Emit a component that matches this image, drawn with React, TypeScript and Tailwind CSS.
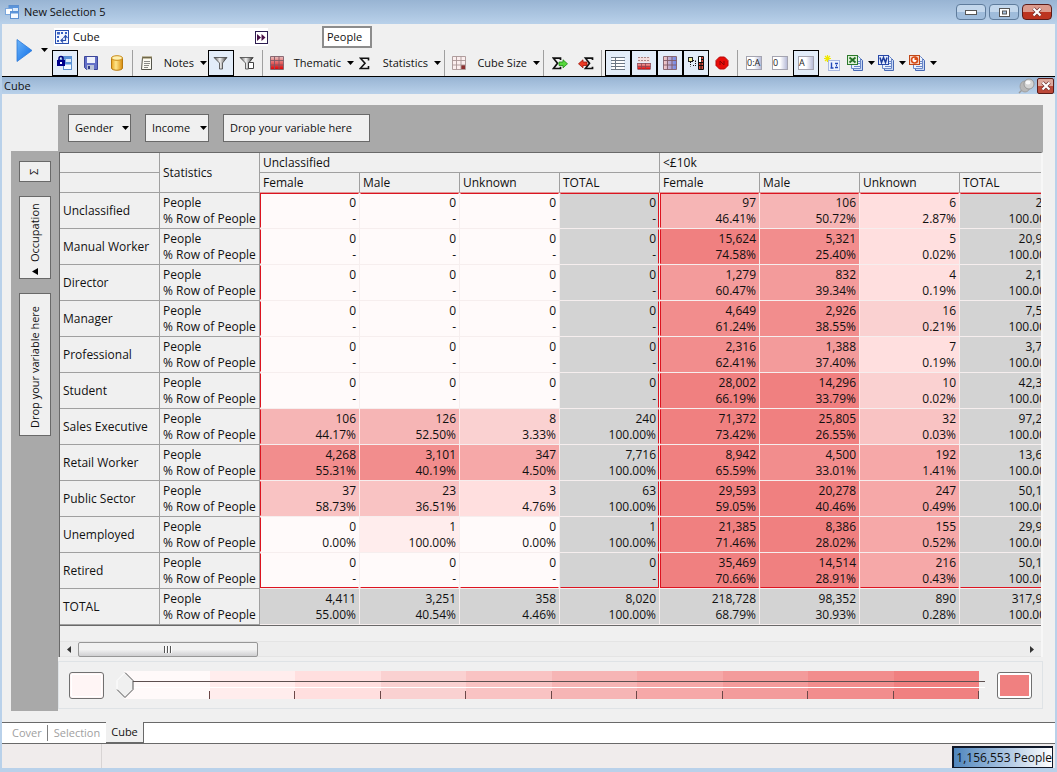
import React, { useState } from 'react';

type Stat = [string, string];

interface CubeRow {
  label: string;
  cells: Stat[];
}

const LEVEL_CLASSES = [
  'bg-[#fffafa]',
  'bg-[#ffeded]',
  'bg-[#ffdfdf]',
  'bg-[#fad1d1]',
  'bg-[#f9c3c3]',
  'bg-[#f6b5b5]',
  'bg-[#f6a8a8]',
  'bg-[#f39b9b]',
  'bg-[#f28d8d]',
  'bg-[#f08080]',
];

// Upper bound (exclusive) of each shading level
const LEVEL_LIMITS = [1, 3, 8, 20, 90, 150, 600, 2000, 8000];

const ROWS: CubeRow[] = [
  { label: 'Unclassified', cells: [['0', '-'], ['0', '-'], ['0', '-'], ['0', '-'], ['97', '46.41%'], ['106', '50.72%'], ['6', '2.87%'], ['209', '100.00%']] },
  { label: 'Manual Worker', cells: [['0', '-'], ['0', '-'], ['0', '-'], ['0', '-'], ['15,624', '74.58%'], ['5,321', '25.40%'], ['5', '0.02%'], ['20,950', '100.00%']] },
  { label: 'Director', cells: [['0', '-'], ['0', '-'], ['0', '-'], ['0', '-'], ['1,279', '60.47%'], ['832', '39.34%'], ['4', '0.19%'], ['2,115', '100.00%']] },
  { label: 'Manager', cells: [['0', '-'], ['0', '-'], ['0', '-'], ['0', '-'], ['4,649', '61.24%'], ['2,926', '38.55%'], ['16', '0.21%'], ['7,591', '100.00%']] },
  { label: 'Professional', cells: [['0', '-'], ['0', '-'], ['0', '-'], ['0', '-'], ['2,316', '62.41%'], ['1,388', '37.40%'], ['7', '0.19%'], ['3,711', '100.00%']] },
  { label: 'Student', cells: [['0', '-'], ['0', '-'], ['0', '-'], ['0', '-'], ['28,002', '66.19%'], ['14,296', '33.79%'], ['10', '0.02%'], ['42,308', '100.00%']] },
  { label: 'Sales Executive', cells: [['106', '44.17%'], ['126', '52.50%'], ['8', '3.33%'], ['240', '100.00%'], ['71,372', '73.42%'], ['25,805', '26.55%'], ['32', '0.03%'], ['97,209', '100.00%']] },
  { label: 'Retail Worker', cells: [['4,268', '55.31%'], ['3,101', '40.19%'], ['347', '4.50%'], ['7,716', '100.00%'], ['8,942', '65.59%'], ['4,500', '33.01%'], ['192', '1.41%'], ['13,634', '100.00%']] },
  { label: 'Public Sector', cells: [['37', '58.73%'], ['23', '36.51%'], ['3', '4.76%'], ['63', '100.00%'], ['29,593', '59.05%'], ['20,278', '40.46%'], ['247', '0.49%'], ['50,118', '100.00%']] },
  { label: 'Unemployed', cells: [['0', '0.00%'], ['1', '100.00%'], ['0', '0.00%'], ['1', '100.00%'], ['21,385', '71.46%'], ['8,386', '28.02%'], ['155', '0.52%'], ['29,926', '100.00%']] },
  { label: 'Retired', cells: [['0', '-'], ['0', '-'], ['0', '-'], ['0', '-'], ['35,469', '70.66%'], ['14,514', '28.91%'], ['216', '0.43%'], ['50,199', '100.00%']] },
  { label: 'TOTAL', cells: [['4,411', '55.00%'], ['3,251', '40.54%'], ['358', '4.46%'], ['8,020', '100.00%'], ['218,728', '68.79%'], ['98,352', '30.93%'], ['890', '0.28%'], ['317,970', '100.00%']] },
];

const SUB_HEADERS = ['Female', 'Male', 'Unknown', 'TOTAL', 'Female', 'Male', 'Unknown', 'TOTAL'];

const levelClass = (value: string) => {
  const n = Number(value.replace(/,/g, ''));
  const index = LEVEL_LIMITS.findIndex(limit => n < limit);
  return LEVEL_CLASSES[index === -1 ? 9 : index];
};

/* ---------- icons ---------- */

const Caret: React.FC = () => (
  <svg width="7" height="4" viewBox="0 0 7 4" className="shrink-0"><path d="M0 0h7L3.5 4z" fill="#000" /></svg>
);

const IconWindows: React.FC<{ locked?: boolean }> = ({ locked }) => (
  <svg width="16" height="16" viewBox="0 0 16 16" className="shrink-0">
    <rect x="5" y="1.500" width="9.500" height="8" fill="#dcebfb" stroke="#5b8fd0" />
    <path d="M5 3h10" stroke="#5a94da" strokeWidth="2" />
    <rect x="1.500" y="4.500" width="7" height="6" fill="#fff" stroke="#7ba7dc" />
    <rect x="6.500" y="7.500" width="8" height="7" fill="#f4f9ff" stroke="#5b8fd0" />
    <path d="M6 8.500h9" stroke="#5a94da" strokeWidth="2" />
    {locked && (
      <g>
        <path d="M2 6V3.500a2 2 0 0 1 4 0V6" fill="none" stroke="#000078" strokeWidth="1.500" />
        <rect x="0" y="5" width="8" height="6" fill="#00008c" />
        <rect x="3" y="7" width="2" height="2" fill="#fff" />
      </g>
    )}
  </svg>
);

const IconCube: React.FC = () => (
  <svg width="14" height="14" viewBox="0 0 14 14" className="shrink-0">
    <rect x=".5" y=".5" width="13" height="13" fill="#f4f8ff" stroke="#2a4fae" />
    <path d="M2 2h3v2.500H2zM2 6h2v2H2zM2 10h2v2H2zM6 2h2v2H6zM10 2h2v2h-2z" fill="#3b63c4" />
    <path d="M6.500 10.500h4V6M8.500 8l2-2.500 2 2.500M8 8.500l-2 2 2 2" fill="none" stroke="#2a4fae" strokeWidth="1.200" />
  </svg>
);

const IconSave: React.FC = () => (
  <svg width="16" height="16" viewBox="0 0 16 16">
    <path d="M1.500 1.500h13v13h-11l-2-2z" fill="#6470c8" stroke="#3c4699" />
    <rect x="4" y="2" width="8" height="6" fill="#eef1fb" />
    <rect x="4" y="10" width="7" height="5" fill="#b9c2d8" />
    <rect x="5" y="11" width="2" height="3" fill="#323c86" />
  </svg>
);

const IconDatabase: React.FC = () => (
  <svg width="14" height="16" viewBox="0 0 14 16">
    <defs>
      <linearGradient id="gold" x1="0" x2="1" y1="0" y2="0">
        <stop offset="0" stopColor="#e8a21c" /><stop offset=".4" stopColor="#ffe68a" /><stop offset="1" stopColor="#d98b0c" />
      </linearGradient>
    </defs>
    <path d="M1.500 3v10c0 3 11 3 11 0V3z" fill="url(#gold)" stroke="#b87a10" />
    <ellipse cx="7" cy="3" rx="5.500" ry="2.300" fill="#fff0b0" stroke="#c98c1a" />
  </svg>
);

const IconNotes: React.FC = () => (
  <svg width="14" height="16" viewBox="0 0 14 16">
    <path d="M2.500 2.500h9v12h-10z" fill="#fbfaf2" stroke="#55554c" />
    <path d="M3 1v3M5 1v3M7 1v3M9 1v3M11 1v3" stroke="#8a7c4c" />
    <path d="M4 6.500h6M4 8.500h6M4 10.500h5M4 12.500h4" stroke="#8a8a86" />
  </svg>
);

const IconFilter: React.FC<{ crossed?: boolean }> = ({ crossed }) => (
  <svg width="16" height="14" viewBox="0 0 16 14">
    <defs>
      <linearGradient id="steel" x1="0" x2="1" y1="0" y2="0">
        <stop offset="0" stopColor="#555" /><stop offset=".45" stopColor="#f4f4f4" /><stop offset="1" stopColor="#333" />
      </linearGradient>
    </defs>
    <path d="M1 1.500h13L9.500 7v6h-3V7z" fill="url(#steel)" stroke="#444" strokeWidth=".8" />
    {crossed && <path d="M9.500 6.500v6h5v-6zM11 5.500l3-4" fill="#fff" stroke="#444" />}
  </svg>
);

const IconGrid: React.FC<{ variant: 'red' | 'pale' | 'rows' | 'cols' | 'both' }> = ({ variant }) => (
  <svg width="14" height="14" viewBox="0 0 14 14" className="shrink-0">
    <defs>
      <linearGradient id="gridRed" x1="0" x2="0" y1="0" y2="1"><stop offset="0" stopColor="#e8b8b8" /><stop offset="1" stopColor="#e00808" /></linearGradient>
      <linearGradient id="gridBoth" x1="0" x2="1" y1="0" y2="0"><stop offset="0" stopColor="#f8c8c0" /><stop offset="1" stopColor="#6f88e8" /></linearGradient>
    </defs>
    {variant === 'red' && <rect x="1" y="1" width="12" height="12" fill="url(#gridRed)" />}
    {variant === 'pale' && <><rect x="1" y="1" width="12" height="12" fill="#fbeeee" /><rect x="9" y="9" width="4" height="4" fill="#8c3030" /></>}
    {variant === 'rows' && <rect x="1" y="1" width="12" height="12" fill="#fff" />}
    {variant === 'cols' && <><rect x="1" y="1" width="12" height="5" fill="#f4dede" /><rect x="1" y="7" width="12" height="6" fill="url(#gridRed)" /></>}
    {variant === 'both' && <rect x="1" y="1" width="12" height="12" fill="url(#gridBoth)" />}
    {variant === 'rows' ? (
      <path d="M0 1.500h4M0 4.500h4M0 7.500h4M0 10.500h4M0 13.500h4M5 1.500h9M5 4.500h9M5 7.500h9M5 10.500h9M5 13.500h9M4.500 1v13" stroke="#6b7683" fill="none" />
    ) : variant === 'cols' ? (
      <>
        <path d="M1 1.500h12M1 4.500h12" stroke="#a88" strokeDasharray="2 1" fill="none" />
        <path d="M.5 7.500h13M.5 10.500h13M.5 13.500h13M.5 7v6M4.500 7v6M8.500 7v6M13.500 7v6" stroke="#8c4450" strokeWidth=".8" fill="none" />
      </>
    ) : (
      <path d="M.5.5h13v13H.5zM.5 4.500h13M.5 9h13M4.500.5v13M9 .5v13" stroke={variant === 'pale' ? '#a89494' : '#7e5a65'} strokeWidth=".9" fill="none" />
    )}
  </svg>
);

const IconSigma: React.FC = () => (
  <svg width="11" height="13" viewBox="0 0 11 13" className="shrink-0">
    <path d="M9.500 3.500V1.200H1.500L6 6.300l-4.700 5.200h8.200V9" fill="none" stroke="#111" strokeWidth="1.600" />
  </svg>
);

const IconSigmaArrow: React.FC<{ out?: boolean }> = ({ out }) => (
  <svg width="16" height="13" viewBox="0 0 16 13">
    {out ? (
      <>
        <path d="M8.500 3V1.200H1.500L5.500 6.300l-4 5.200h7V9.800" fill="none" stroke="#111" strokeWidth="1.700" />
        <path d="M7 5h4V2.800l4.500 4-4.500 4V8.500H7z" fill="#57d83c" stroke="#1c8a12" strokeWidth=".8" />
      </>
    ) : (
      <>
        <path d="M14.500 3V1.200h-7l4 5.100-4 5.200h7V9.800" fill="none" stroke="#111" strokeWidth="1.700" />
        <path d="M9 5H5V2.800l-4.500 4 4.500 4V8.500h4z" fill="#ec3a24" stroke="#9c1408" strokeWidth=".8" />
      </>
    )}
  </svg>
);

const IconTree: React.FC = () => (
  <svg width="16" height="14" viewBox="0 0 16 14">
    <rect x=".5" y="1.500" width="4" height="4" fill="#f2f29a" stroke="#222" />
    <path d="M2.500 6v4.500M5 4.500h2.500M5 9.500h3M7.500 5v5" stroke="#111" strokeDasharray="1 1" fill="none" />
    <rect x="10" y="1" width="5" height="12" fill="#e04a3a" />
    <path d="M10.500.5h5v13h-5zM10 3.500h6M10 6.500h6M10 9.500h6M13 0v13" stroke="#111" fill="none" />
    <rect x="11" y="1" width="2" height="5" fill="#fff" />
  </svg>
);

const IconStop: React.FC = () => (
  <svg width="14" height="14" viewBox="0 0 14 14">
    <path d="M4.500 1h5L13 4.500v5L9.500 13h-5L1 9.500v-5z" fill="#e80c08" stroke="#b80808" />
    <path d="M5 9V5l4 4V5" fill="none" stroke="#8c0404" />
  </svg>
);

const IconLabel: React.FC<{ text: string }> = ({ text }) => (
  <span className="flex h-3.5 w-4 items-center border border-[#a4a4b0] bg-linear-to-r from-white from-50% to-[#b8bcd8] text-[9px] leading-3 text-[#222]">{text}</span>
);

const IconNewCube: React.FC = () => (
  <svg width="16" height="16" viewBox="0 0 16 16">
    <path d="M3.500 0v7M0 3.500h7M1 1l5 5M6 1L1 6" stroke="#f0e800" strokeWidth="1.200" />
    <rect x="4.500" y="5.500" width="11" height="10" fill="#eef3ff" stroke="#a9b8e0" />
    <path d="M7.500 7.500v6M6.500 13h3M11 8.500h3M11 12.500h3M12 10.500h1" stroke="#2448b8" strokeWidth="1.400" fill="none" />
  </svg>
);

const IconExport: React.FC<{ kind: 'excel' | 'word' | 'ppt' }> = ({ kind }) => (
  <svg width="16" height="16" viewBox="0 0 16 16">
    <path d="M6.500 3.500h7l2 2v10h-9z" fill="#c8d8f4" stroke="#4668b4" />
    <path d="M4.500 1.500h7l2 2v10h-9z" fill="#eaf1fd" stroke="#6a88c8" />
    <path d="M10 6.500h3M10 8.500h3M7 11.500h6" stroke="#6a88c8" />
    {kind === 'excel' && <><rect x=".5" y=".5" width="10" height="9" fill="#dff0d8" stroke="#2c7a2c" /><path d="M2.500 2.500l6 5M8.500 2.500l-6 5" stroke="#227022" strokeWidth="1.800" /></>}
    {kind === 'word' && <><rect x=".5" y=".5" width="10" height="9" fill="#e4ecfc" stroke="#2848a8" /><path d="M2 2.500l1.500 5 2-5 2 5L9 2.500" fill="none" stroke="#1c3c9c" strokeWidth="1.500" /></>}
    {kind === 'ppt' && <><rect x=".5" y=".5" width="10" height="9" fill="#f7d8c8" stroke="#c04818" /><circle cx="5.500" cy="5" r="3" fill="#fff" stroke="#d84c18" strokeWidth="1.700" /><path d="M5.500 5V1.500a3.500 3.500 0 0 1 3.500 3.500z" fill="#d84c18" /></>}
  </svg>
);

const IconClose: React.FC = () => (
  <svg width="12" height="10" viewBox="0 0 12 10">
    <path d="M2.500 1.500l7 7M9.500 1.500l-7 7" stroke="#6e3030" strokeWidth="3.600" />
    <path d="M2.500 1.500l7 7M9.500 1.500l-7 7" stroke="#fff" strokeWidth="2.200" />
  </svg>
);

const IconPin: React.FC = () => (
  <svg width="17" height="16" viewBox="0 0 17 16" className="shrink-0">
    <path d="M6 10l-5 5" stroke="#999" strokeWidth="1.500" />
    <ellipse cx="7" cy="8.500" rx="5" ry="5.500" fill="#b8b8b8" stroke="#999" strokeWidth=".8" />
    <circle cx="11" cy="6" r="5" fill="#d4d4d4" stroke="#8c8c8c" strokeWidth=".8" />
    <ellipse cx="10" cy="4.500" rx="2.500" ry="2" fill="#f8f8f8" />
  </svg>
);

/* ---------- toolbar pieces ---------- */

const ToolButton: React.FC<{ label: string; active?: boolean; children: React.ReactNode }> = ({ label, active, children }) => (
  <button
    aria-label={label}
    className={`flex h-[26px] w-[26px] shrink-0 items-center justify-center border ${active ? 'border-black bg-[#e3edf9]' : 'border-transparent'}`}
  >
    {children}
  </button>
);

const ToolMenu: React.FC<{ label: string; icon: React.ReactNode; width: string }> = ({ label, icon, width }) => (
  <button className={`flex h-[26px] shrink-0 items-center justify-between pr-px pl-1 ${width}`}>
    {icon}
    <span className="flex items-center gap-1.5">{label}<Caret /></span>
  </button>
);

const ExportMenu: React.FC<{ label: string; kind: 'excel' | 'word' | 'ppt' }> = ({ label, kind }) => (
  <button aria-label={label} className="flex h-[26px] w-[31px] shrink-0 items-center justify-between pr-px pl-0.5">
    <IconExport kind={kind} />
    <Caret />
  </button>
);

const Separator: React.FC = () => <span className="ml-0.5 mr-[3px] h-[26px] w-px shrink-0 bg-[#a0a0a0]" />;

const Toolbar: React.FC = () => (
  <div className="flex h-[53px] border-b border-black bg-[#f0f0f0] text-[11px]">
    <div className="flex w-[50px] shrink-0 items-center pl-3.5">
      <button aria-label="Run">
        <svg width="17" height="25" viewBox="0 0 17 25">
          <defs><linearGradient id="play" x1="0" x2="1" y1="0" y2="1"><stop offset="0" stopColor="#6cb4f8" /><stop offset="1" stopColor="#0c6ce8" /></linearGradient></defs>
          <path d="M1 1.500l15 11-15 11z" fill="url(#play)" stroke="#2c78d8" strokeWidth=".8" />
        </svg>
      </button>
      <button aria-label="Run options" className="ml-2"><Caret /></button>
    </div>
    <div className="flex min-w-0 flex-1 flex-col justify-between">
      <div className="flex h-[26px] items-center">
        <div className="ml-0.5 flex h-[18px] w-[214px] items-center gap-1 bg-white pl-px">
          <IconCube />
          <input aria-label="Name" defaultValue="Cube" className="h-4 min-w-0 flex-1 bg-transparent outline-none" />
          <button aria-label="Expand" className="flex h-[13px] w-[13px] items-center justify-center border border-[#2c1c50] bg-white">
            <svg width="9" height="7" viewBox="0 0 9 7"><path d="M0 0l4 3.500L0 7zM4.500 0l4 3.500-4 3.500z" fill="#4a1048" /></svg>
          </button>
        </div>
        <button className="ml-[54px] flex h-[22px] w-[50px] items-center border-2 border-[#8c8c8c] bg-white pl-[3px]">People</button>
      </div>
      <div className="flex">
        <ToolButton label="Lock" active><IconWindows locked /></ToolButton>
        <ToolButton label="Save"><IconSave /></ToolButton>
        <ToolButton label="Database"><IconDatabase /></ToolButton>
        <Separator />
        <ToolMenu label="Notes" icon={<IconNotes />} width="w-[72px]" />
        <ToolButton label="Filter" active><IconFilter /></ToolButton>
        <ToolButton label="Clear filter"><IconFilter crossed /></ToolButton>
        <Separator />
        <ToolMenu label="Thematic" icon={<IconGrid variant="red" />} width="w-[89px]" />
        <ToolMenu label="Statistics" icon={<IconSigma />} width="w-[87px]" />
        <Separator />
        <ToolMenu label="Cube Size" icon={<IconGrid variant="pale" />} width="w-[93px]" />
        <Separator />
        <ToolButton label="Add totals"><IconSigmaArrow out /></ToolButton>
        <ToolButton label="Remove totals"><IconSigmaArrow /></ToolButton>
        <Separator />
        <ToolButton label="Row view" active><IconGrid variant="rows" /></ToolButton>
        <ToolButton label="Column view" active><IconGrid variant="cols" /></ToolButton>
        <ToolButton label="Grid view" active><IconGrid variant="both" /></ToolButton>
        <ToolButton label="Tree view" active><IconTree /></ToolButton>
        <ToolButton label="Stop"><IconStop /></ToolButton>
        <Separator />
        <ToolButton label="Code and description"><IconLabel text="0:A" /></ToolButton>
        <ToolButton label="Code"><IconLabel text="0" /></ToolButton>
        <ToolButton label="Description" active><IconLabel text="A" /></ToolButton>
        <ToolButton label="New cube"><IconNewCube /></ToolButton>
        <ExportMenu label="Export to Excel" kind="excel" />
        <ExportMenu label="Export to Word" kind="word" />
        <ExportMenu label="Export to PowerPoint" kind="ppt" />
      </div>
    </div>
  </div>
);

/* ---------- window chrome ---------- */

const TitleBar: React.FC = () => (
  <header className="flex h-6 items-center bg-linear-to-b from-[#98b4d3] to-[#b9d1ea] pr-[5px] pl-1">
    <IconWindows />
    <h1 className="ml-1 flex-1 text-[11px]">New Selection 5</h1>
    <div className="flex gap-[3px]">
      <button aria-label="Minimize" className="flex h-4 w-[30px] items-center justify-center rounded-sm border border-[#5f7c9c] bg-linear-to-b from-[#c3d7ec] from-50% to-[#9fbcdb] to-50%">
        <svg width="12" height="5" viewBox="0 0 12 5"><rect x=".5" y=".5" width="11" height="4" fill="#fff" stroke="#555" /></svg>
      </button>
      <button aria-label="Maximize" className="flex h-4 w-[30px] items-center justify-center rounded-sm border border-[#5f7c9c] bg-linear-to-b from-[#c3d7ec] from-50% to-[#9fbcdb] to-50%">
        <svg width="11" height="9" viewBox="0 0 11 9"><rect x=".5" y=".5" width="10" height="8" fill="#fff" stroke="#555" /><rect x="3.500" y="3" width="4" height="3" fill="#a8c4e0" stroke="#555" /></svg>
      </button>
      <button aria-label="Close window" className="flex h-4 w-[30px] items-center justify-center rounded-sm border border-[#5c1c18] bg-linear-to-b from-[#dc9a8c] from-50% to-[#bc3420] to-50%">
        <IconClose />
      </button>
    </div>
  </header>
);

/* ---------- cube table ---------- */

const HEAD = 'border-r border-b border-r-[#a0a0a0] bg-[#f0f0f0] pl-[3px] text-left font-normal';

const CubeTable: React.FC = () => (
  <table className="w-[1000px] table-fixed border-separate border-spacing-0 leading-4">
    <thead>
      <tr className="h-5">
        <td className={`border-b-[#a0a0a0] ${HEAD}`} />
        <th rowSpan={2} className={`border-b-[#a0a0a0] ${HEAD}`}>Statistics</th>
        <th colSpan={4} className={`border-b-[#a0a0a0] ${HEAD}`}>Unclassified</th>
        <th colSpan={4} className={`border-b-[#a0a0a0] ${HEAD}`}>&lt;£10k</th>
      </tr>
      <tr className="h-5">
        <td className={`border-b-[#a0a0a0] ${HEAD}`} />
        {SUB_HEADERS.map((name, i) => <th key={i} className={`border-b-[#e09898] ${HEAD}`}>{name}</th>)}
      </tr>
    </thead>
    <tbody>
      {ROWS.map((row, r) => {
        const isTotalRow = row.label === 'TOTAL';
        return (
          <tr key={row.label}>
            <th className={`border-b-[#a0a0a0] ${HEAD}`}>{row.label}</th>
            <td className={`border-b-[#a0a0a0] ${HEAD}`}>
              <div>People</div>
              <div>% Row of People</div>
            </td>
            {row.cells.map(([count, percent], c) => {
              const isTotal = isTotalRow || c % 4 === 3;
              const edges = isTotalRow
                ? 'border-transparent'
                : [
                    r === 0 ? 'border-t-[#dc1420]' : 'border-t-transparent',
                    r === ROWS.length - 2 ? 'border-b-[#dc1420]' : 'border-b-transparent',
                    c % 4 === 0 ? 'border-l-[#dc1420]' : 'border-l-transparent',
                    c % 4 === 3 ? 'border-r-[#dc1420]' : 'border-r-transparent',
                  ].join(' ');
              return (
                <td key={c} className="border-r border-b border-[#f6eeee] p-0 text-right">
                  <div className={`h-[35px] border pt-px pr-0.5 ${edges} ${isTotal ? 'bg-[#d3d3d3]' : levelClass(count)}`}>
                    <div>{count}</div>
                    <div>{percent}</div>
                  </div>
                </td>
              );
            })}
          </tr>
        );
      })}
    </tbody>
  </table>
);

const HorizontalScroll: React.FC = () => (
  <div className="mt-[15px] flex h-4 items-center border-y border-[#e4e4e4] bg-[#ededed]">
    <button aria-label="Scroll left" className="flex w-[18px] justify-center">
      <svg width="4" height="7" viewBox="0 0 4 7"><path d="M4 0v7L0 3.500z" fill="#333" /></svg>
    </button>
    <div className="flex h-[15px] w-[180px] items-center justify-center gap-px rounded-xs border border-[#979797] bg-linear-to-b from-[#f2f2f2] from-50% to-[#cfcfd1]">
      <span className="h-[7px] w-0.5 border-l border-[#555] bg-white" />
      <span className="h-[7px] w-0.5 border-l border-[#555] bg-white" />
      <span className="h-[7px] w-0.5 border-l border-[#555] bg-white" />
    </div>
    <button aria-label="Scroll right" className="ml-auto flex w-[18px] justify-center">
      <svg width="4" height="7" viewBox="0 0 4 7"><path d="M0 0v7l4-3.500z" fill="#333" /></svg>
    </button>
  </div>
);

const ThematicLegend: React.FC = () => {
  const [value, setValue] = useState(0);
  return (
    <div className="mt-1 mb-0.5 flex h-12 items-center border border-[#dfe3e6] bg-[#f0f0f0] px-2.5">
      <button aria-label="Lowest colour" className="h-[27px] w-[35px] shrink-0 rounded-[3px] border border-[#707070] bg-[#fff5f5] outline-1 -outline-offset-3 outline-white" />
      <div className="relative mr-3 ml-5 h-7 flex-1">
        <div className="mr-1.5 flex h-7">
          {LEVEL_CLASSES.map((cls, i) => (
            <div key={i} className={`flex flex-1 items-end justify-end ${cls}`}>
              <span className="h-2 w-px bg-[#6b4848]" />
            </div>
          ))}
        </div>
        <div className="absolute inset-x-0 top-2.5 h-px bg-[#5c5050]" />
        <div className="absolute inset-x-0 top-4 h-px bg-white" />
        <svg width="18" height="26" viewBox="0 0 18 26" className="absolute top-px left-0 -translate-x-2" style={{ marginLeft: `${value}%` }}>
          <path d="M9 .5l8 8v9l-8 8-8-8v-9z" fill="#f0f0f0" />
          <path d="M9 .5l8 8v9l-8 8-8-8" fill="none" stroke="#555" />
          <path d="M1 17.500v-9l8-8" fill="none" stroke="#fff" />
        </svg>
        <input
          type="range"
          aria-label="Shading threshold"
          min={0}
          max={99}
          value={value}
          onChange={e => setValue(Number(e.target.value))}
          className="absolute inset-0 h-full w-full opacity-0"
        />
      </div>
      <button aria-label="Highest colour" className="flex h-[27px] w-[35px] shrink-0 rounded-[3px] border border-[#707070] bg-white p-0.5">
        <span className="flex-1 bg-[#f08080]" />
      </button>
    </div>
  );
};

const CHIP = 'border border-[#696969] bg-[#f0f0f0] text-[11px]';

const App: React.FC = () => {
  return (
    <div className="flex min-h-screen flex-col overflow-hidden bg-[#b9d1ea] font-['Open_Sans','Noto_Sans',sans-serif] text-[12px] leading-4 text-[#101010]">
      <TitleBar />
      <div className="mx-0.5 mb-1 flex flex-1 flex-col bg-[#f0f0f0]">
        <Toolbar />
        <div className="flex h-[17px] items-center bg-linear-to-b from-[#98b4d3] to-[#b9d1ea]">
          <h2 className="flex-1 pl-0.5 text-[11px]">Cube</h2>
          <button aria-label="Pin"><IconPin /></button>
          <button aria-label="Close pane" className="mr-px ml-0.5 flex h-4 w-[17px] items-center justify-center rounded-xs border border-[#5c1c18] bg-linear-to-b from-[#dca89c] from-50% to-[#bc4838] to-50%">
            <IconClose />
          </button>
        </div>

        <main className="mt-[11px] mr-3 ml-[9px] flex">
          <aside className="mt-[46px] flex w-[47px] shrink-0 flex-col items-center gap-3.5 bg-[#a9a9a9] pt-2.5">
            <button aria-label="Measure" className={`flex h-[21px] w-8 items-center justify-center ${CHIP}`}>
              <span className="-rotate-90">Σ</span>
            </button>
            <button className={`flex h-[83px] w-8 rotate-180 items-center gap-1.5 pt-[3px] [writing-mode:vertical-rl] ${CHIP}`}>
              <svg width="6" height="7" viewBox="0 0 6 7"><path d="M0 0v7l6-3.500z" fill="#000" /></svg>
              Occupation
            </button>
            <div className={`flex h-[143px] w-8 rotate-180 items-center pt-[7px] [writing-mode:vertical-rl] ${CHIP}`}>
              Drop your variable here
            </div>
          </aside>

          <section className="min-w-0 flex-1">
            <div className="flex h-[47px] items-start gap-3.5 bg-[#a9a9a9] pt-[9px] pl-2.5">
              <button className={`flex h-7 w-[63px] items-center justify-between pr-px pl-1.5 ${CHIP}`}>Gender<Caret /></button>
              <button className={`flex h-7 w-16 items-center justify-between pr-px pl-1.5 ${CHIP}`}>Income<Caret /></button>
              <div className={`flex h-7 w-[147px] items-center pl-1.5 ${CHIP}`}>Drop your variable here</div>
            </div>
            <div className="bg-[#a9a9a9] pl-px">
              <div className="border-t border-r-2 border-l border-t-[#696969] border-r-[#f7f7f7] border-l-[#696969] bg-[#f0f0f0]">
                <div className="overflow-hidden border-b border-[#696969]">
                  <CubeTable />
                </div>
                <HorizontalScroll />
              </div>
            </div>
            <ThematicLegend />
          </section>
        </main>

        <nav className="mt-auto flex h-[22px] border-y border-[#696969] bg-white text-[11px]">
          <button className="mt-0.5 h-4 border-r border-[#808080] pr-[5px] pl-2.5 text-[#a0a0a0]">Cover</button>
          <button className="mt-0.5 h-4 px-1.5 text-[#a0a0a0]">Selection</button>
          <button className="-mt-px h-[21px] border-r border-b border-[#696969] bg-[#f0f0f0] px-[5px]">Cube</button>
        </nav>
        <footer className="flex h-6 items-end bg-[#f0ecec]">
          <span className="h-6 w-[100px] border-r border-[#d8d4d4]" />
          <span className="mr-0.5 ml-auto flex h-[22px] items-center border border-t-2 border-l-2 border-[#101828] bg-linear-to-r from-[#4f86bd] to-white pl-0.5">
            1,156,553 People
          </span>
        </footer>
      </div>
    </div>
  );
};

export default App;
